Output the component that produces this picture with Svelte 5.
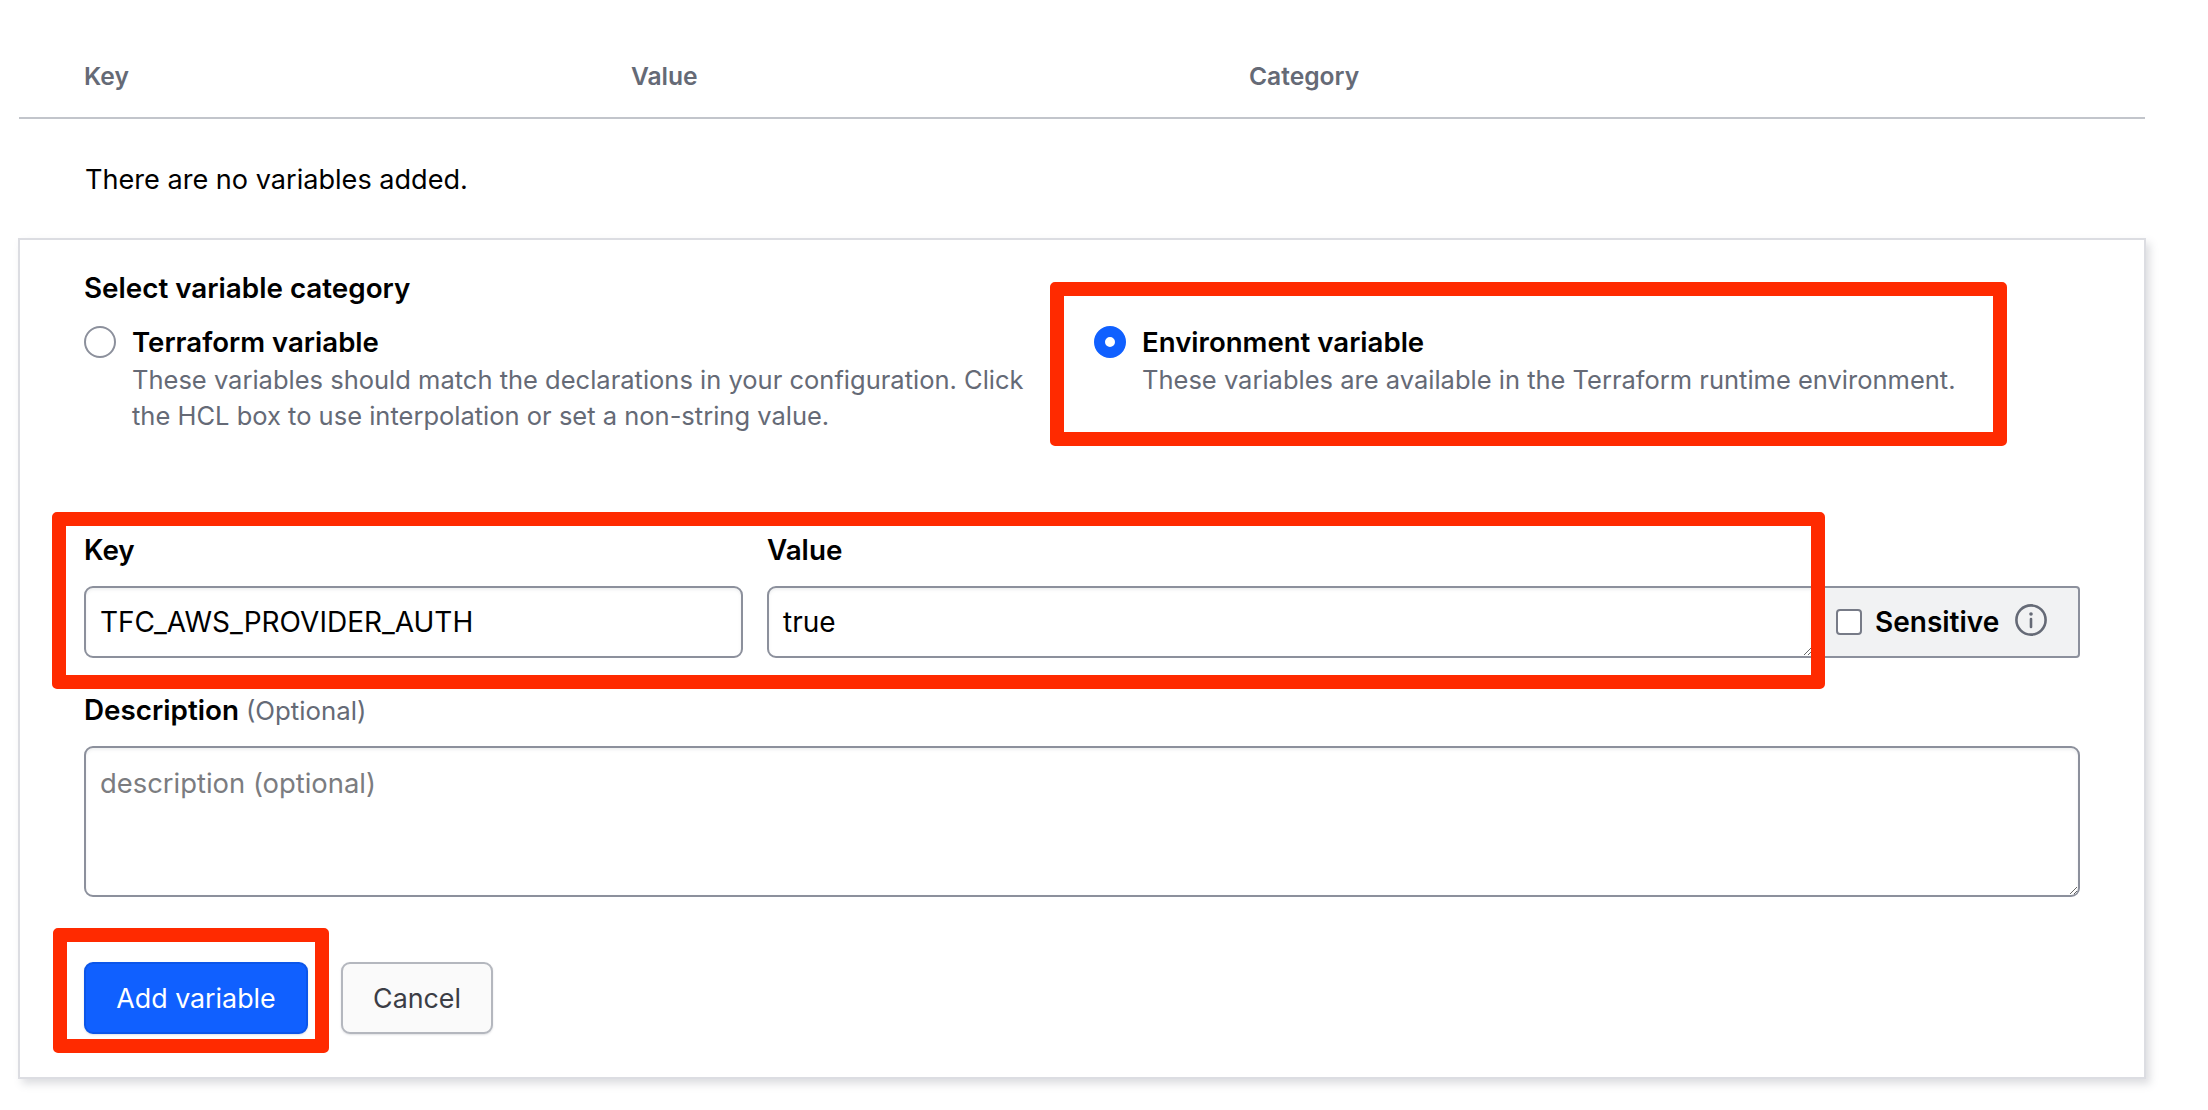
<script lang="ts">
    const columns = ["Key", "Value", "Category"];
</script>

<div class="page">
    <div class="table-head">
        {#each columns as col}
            <span class="col">{col}</span>
        {/each}
    </div>
    <p class="empty">There are no variables added.</p>

    <form class="card" onsubmit={(e) => e.preventDefault()}>
        <div class="legend">Select variable category</div>
        <div class="categories">
            <label class="category">
                <input type="radio" name="category" value="terraform" />
                <span class="category-text">
                    <span class="category-name">Terraform variable</span>
                    <span class="category-desc">These variables should match the declarations in your configuration. Click the HCL box to use interpolation or set a non-string value.</span>
                </span>
            </label>
            <label class="category env">
                <input type="radio" name="category" value="env" checked />
                <span class="category-text">
                    <span class="category-name">Environment variable</span>
                    <span class="category-desc">These variables are available in the Terraform runtime environment.</span>
                </span>
            </label>
        </div>

        <div class="fields">
            <div class="field key">
                <label for="var-key">Key</label>
                <input id="var-key" class="control" type="text" value="TFC_AWS_PROVIDER_AUTH" />
            </div>
            <div class="field value">
                <label for="var-value">Value</label>
                <div class="value-row">
                    <textarea id="var-value" class="control" rows="1">true</textarea>
                    <div class="sensitive">
                        <input type="checkbox" id="var-sensitive" />
                        <label for="var-sensitive">Sensitive</label>
                        <svg viewBox="0 0 32 32" width="32" height="32" fill="none" aria-hidden="true">
                            <circle cx="16" cy="16" r="14.6" stroke="#656a76" stroke-width="2.6" />
                            <circle cx="16" cy="10" r="1.8" fill="#656a76" />
                            <path d="M16 15v8" stroke="#656a76" stroke-width="2.6" stroke-linecap="round" />
                        </svg>
                    </div>
                </div>
            </div>
        </div>

        <div class="description">
            <label for="var-desc">Description <span class="optional">(Optional)</span></label>
            <textarea id="var-desc" class="control" placeholder="description (optional)"></textarea>
        </div>

        <div class="actions">
            <button class="btn primary" type="submit">Add variable</button>
            <button class="btn" type="button">Cancel</button>
        </div>
    </form>

    <!-- annotation boxes drawn on top of the screenshot -->
    <div class="mark mark-env"></div>
    <div class="mark mark-fields"></div>
    <div class="mark mark-add"></div>
</div>

<style>
    :global(body) {
        background: #fff;
    }

    .page {
        position: relative;
        height: 1110px;
        padding: 0 62px 0 18px;
        box-sizing: border-box;
        font-family: Inter, "Liberation Sans", sans-serif;
        color: #000;
        overflow: hidden;
    }

    .table-head {
        display: grid;
        grid-template-columns: 547px 618px 1fr;
        padding: 62px 0 27px 65px;
        border-bottom: 2px solid #c2c5cb;
        margin-left: 1px;
        margin-right: 1px;
    }

    .col {
        font-size: 24.6px;
        line-height: 28px;
        font-weight: 600;
        color: #656a76;
    }

    .empty {
        margin: 0;
        padding: 43px 0 0 67px;
        font-size: 27.1px;
        line-height: 36px;
        height: 76px;
    }

    .card {
        background: #fff;
        border: 2px solid #dcdde2;
        box-shadow: 4px 5px 8px rgba(101, 106, 118, 0.22);
        padding: 30px 64px 30px 64px;
        height: 841px;
        box-sizing: border-box;
    }

    .legend {
        font-size: 27.8px;
        line-height: 36px;
        font-weight: 600;
    }

    .categories {
        display: grid;
        grid-template-columns: 1010px 1fr;
        margin-top: 20px;
        height: 206px;
    }

    .category {
        display: flex;
        gap: 16px;
    }

    .category input {
        appearance: none;
        flex: none;
        width: 32px;
        height: 32px;
        margin: 0;
        border: 2px solid #8c909c;
        border-radius: 50%;
        background: #fff;
        box-sizing: border-box;
    }

    .category input:checked {
        border: 11px solid #1060ff;
    }

    .category-text {
        display: flex;
        flex-direction: column;
        width: 900px;
    }

    .category-name {
        font-size: 27.6px;
        line-height: 32px;
        font-weight: 600;
    }

    .category-desc {
        margin-top: 4px;
        font-size: 25.5px;
        line-height: 36px;
        color: #656a76;
    }

    .fields {
        display: flex;
        gap: 24px;
    }

    .field label,
    .description label {
        display: block;
        font-size: 27.8px;
        line-height: 36px;
        font-weight: 600;
    }

    .key {
        flex: none;
        width: 659px;
    }

    .value {
        flex: 1;
    }

    .control {
        display: block;
        width: 100%;
        box-sizing: border-box;
        margin: 0;
        border: 2px solid #8c909c;
        border-radius: 9px;
        background: #fff;
        color: #000;
        font-family: inherit;
        font-size: 28px;
        line-height: 36px;
        padding: 16px 14px;
        box-shadow: inset 0 2px 3px rgba(101, 106, 118, 0.1);
        outline: none;
    }

    .field .control {
        margin-top: 18px;
        height: 72px;
    }

    .value-row {
        display: flex;
    }

    .value-row .control {
        flex: 1;
        min-width: 0;
        border-top-right-radius: 0;
        border-bottom-right-radius: 0;
    }

    .sensitive {
        flex: none;
        margin-top: 18px;
        height: 72px;
        width: 266px;
        box-sizing: border-box;
        display: flex;
        align-items: center;
        gap: 13px;
        padding-left: 22px;
        background: #f1f2f3;
        border: 2px solid #8c909c;
        border-left: 0;
        border-radius: 0 4px 4px 0;
    }

    .sensitive input {
        appearance: none;
        width: 26px;
        height: 26px;
        margin: 0;
        border: 2px solid #777b87;
        border-radius: 4px;
        background: #fff;
        box-sizing: border-box;
    }

    .sensitive label {
        font-size: 28px;
        line-height: 36px;
    }

    .sensitive svg {
        margin: -4px 0 0 3px;
    }

    .description {
        margin-top: 34px;
    }

    .optional {
        font-weight: 400;
        font-size: 25.8px;
        color: #656a76;
    }

    .description .control {
        margin-top: 17px;
        height: 151px;
        padding-top: 17px;
    }

    .description .control::placeholder {
        color: #7b7c80;
        opacity: 1;
        font-size: 27.4px;
    }

    .actions {
        display: flex;
        gap: 33px;
        margin-top: 65px;
    }

    .btn {
        height: 72px;
        width: 152px;
        padding: 0;
        border: 2px solid #b4b7be;
        border-radius: 9px;
        background: #fafafa;
        color: #3b3d45;
        font-family: inherit;
        font-size: 26.8px;
        box-shadow: 0 1px 2px rgba(101, 106, 118, 0.2);
    }

    .primary {
        width: 224px;
        background: #1060ff;
        border-color: #0c56e9;
        color: #fff;
    }

    .mark {
        position: absolute;
        box-sizing: border-box;
        border: 14px solid #ff2a00;
        border-radius: 5px;
        pointer-events: none;
    }

    .mark-env {
        left: 1050px;
        top: 282px;
        width: 957px;
        height: 164px;
    }

    .mark-fields {
        left: 52px;
        top: 512px;
        width: 1773px;
        height: 177px;
    }

    .mark-add {
        left: 53px;
        top: 928px;
        width: 276px;
        height: 125px;
    }
</style>
